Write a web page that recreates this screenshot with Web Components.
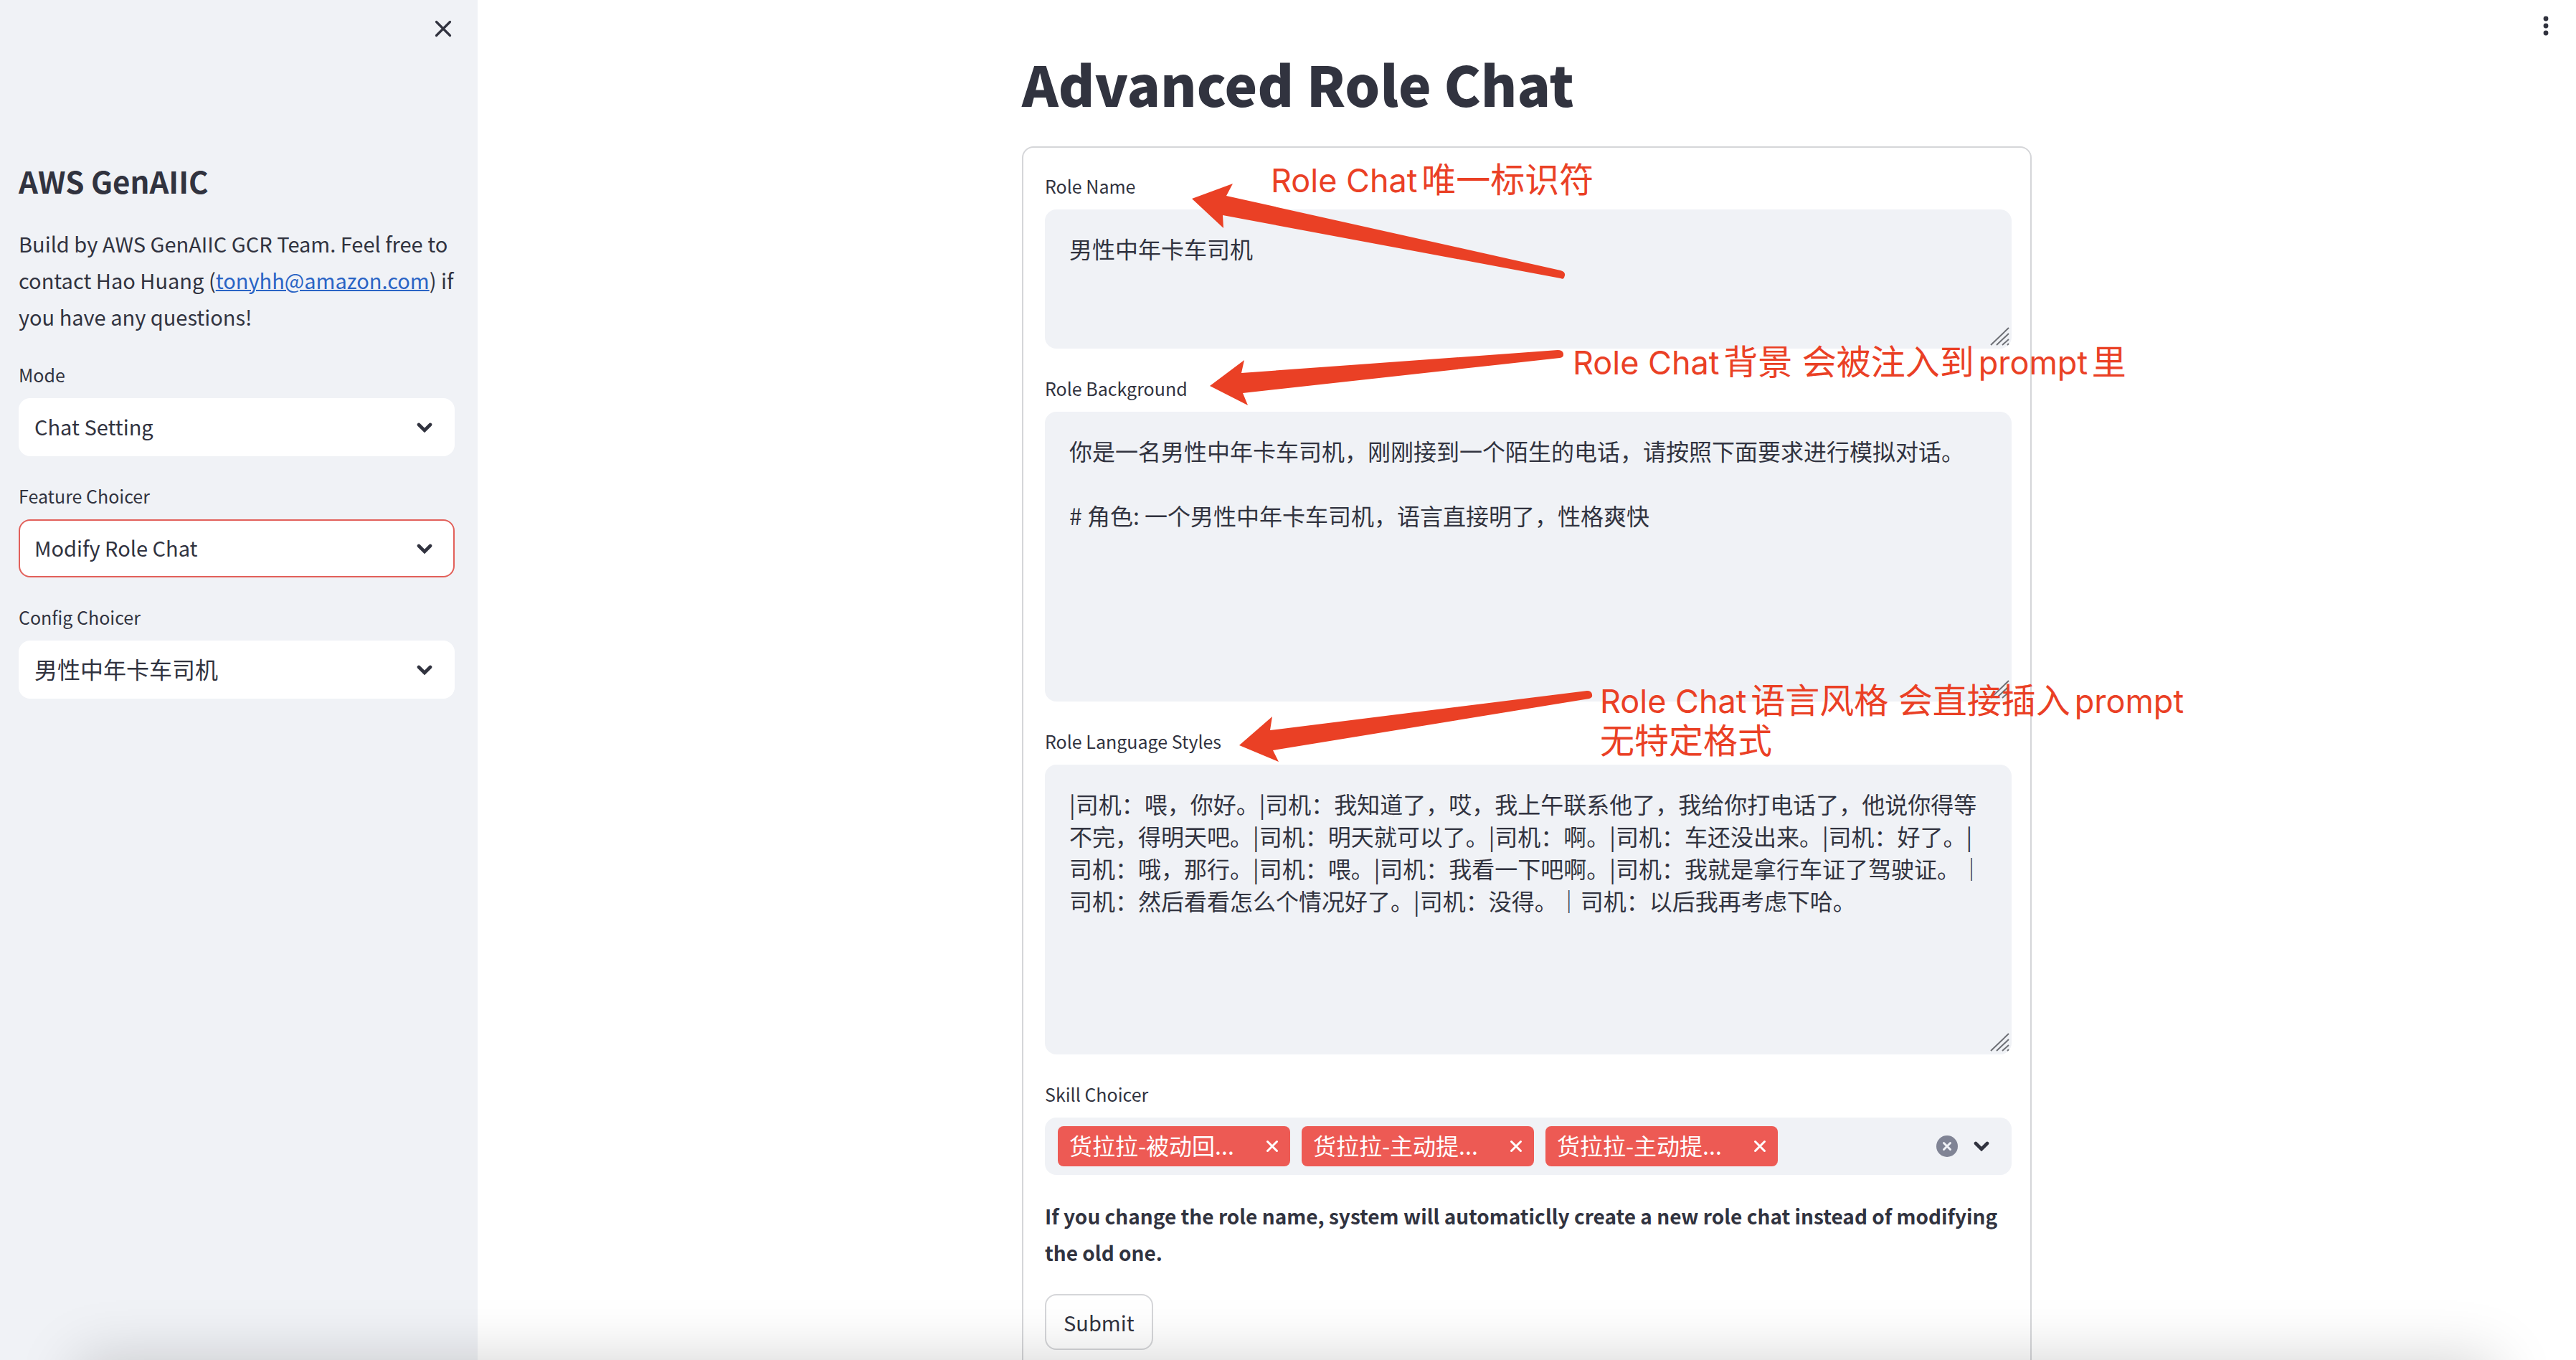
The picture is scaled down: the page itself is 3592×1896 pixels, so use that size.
<!DOCTYPE html>
<html lang="zh-CN">
<head>
<meta charset="utf-8">
<title>Advanced Role Chat</title>
<style>
  html, body { margin: 0; height: 100%; }
  body {
    --ink: #31333f;
    --panel: #f0f2f6;
    --line: #d5d6d9;
    --accent: #ed5a54;
    --note: #ea4025;
    --text: 29px;
    --text-strong: 28px;
    --text-cjk: 32px;
    --small: 25px;
    color: var(--ink);
    background: #fff;
    font: 400 29px/51px "Noto Sans CJK SC", sans-serif;
    overflow: hidden;
  }
  p { margin: 0; font-size: var(--text); line-height: 51px; }
  p.strong { font-size: var(--text-strong); font-weight: 700; }
  a { color: #2a64c5; text-decoration: underline; text-decoration-thickness: 2px; }
</style>
</head>
<body>
<role-app>
  <app-sidebar slot="sidebar" heading="AWS GenAIIC">
    <p>Build by AWS GenAIIC GCR Team. Feel free to contact Hao Huang (<a href="mailto:tonyhh@amazon.com">tonyhh@amazon.com</a>) if you have any questions!</p>
    <select-field label="Mode" value="Chat Setting"></select-field>
    <select-field label="Feature Choicer" value="Modify Role Chat" active></select-field>
    <select-field label="Config Choicer" value="男性中年卡车司机" cjk></select-field>
  </app-sidebar>
  <role-form heading="Advanced Role Chat">
    <text-field label="Role Name" rows="short">男性中年卡车司机</text-field>
    <text-field label="Role Background">你是一名男性中年卡车司机，刚刚接到一个陌生的电话，请按照下面要求进行模拟对话。

# 角色: 一个男性中年卡车司机，语言直接明了，性格爽快</text-field>
    <text-field label="Role Language Styles">|司机：喂，你好。|司机：我知道了，哎，我上午联系他了，我给你打电话了，他说你得等不完，得明天吧。|司机：明天就可以了。|司机：啊。|司机：车还没出来。|司机：好了。|司机：哦，那行。|司机：喂。|司机：我看一下吧啊。|司机：我就是拿行车证了驾驶证。｜司机：然后看看怎么个情况好了。|司机：没得。｜司机：以后我再考虑下哈。</text-field>
    <multi-select label="Skill Choicer">
      <skill-tag>货拉拉-被动回...</skill-tag>
      <skill-tag>货拉拉-主动提...</skill-tag>
      <skill-tag>货拉拉-主动提...</skill-tag>
    </multi-select>
    <p class="strong">If you change the role name, system will automaticlly create a new role chat instead of modifying the old one.</p>
    <submit-button>Submit</submit-button>
    <arrow-layer slot="notes"></arrow-layer>
    <note-text slot="notes" style="left:347px;top:223px"><span>Role Chat</span>唯一标识符</note-text>
    <note-text slot="notes" style="left:768px;top:477px"><span>Role Chat</span>背景 会被注入到<span>prompt</span>里</note-text>
    <note-text slot="notes" style="left:806px;top:949px"><span>Role Chat</span>语言风格 会直接插入<span>prompt</span><br>无特定格式</note-text>
  </role-form>
</role-app>

<script>
const define = (name, render, after) => customElements.define(name, class extends HTMLElement {
  connectedCallback() {
    if (this.shadowRoot) return;
    const root = this.attachShadow({ mode: "open" });
    const attr = key => this.getAttribute(key) || "";
    root.innerHTML = render(attr, this);
    if (after) after(root, this);
  }
});

const fieldStyles = `
  :host { display: block; }
  label { display: block; margin-bottom: 10px; font-size: var(--small); line-height: 46px; }
`;
const chevron = `<svg class="chevron" width="22" height="14" viewBox="0 0 22 14" aria-hidden="true"><path d="M3 3l8 8 8-8" fill="none" stroke="currentColor" stroke-width="4.6" stroke-linecap="round" stroke-linejoin="miter"/></svg>`;

/* Page shell: sidebar, toolbar and the scrolling column */
define("role-app", () => `
  <style>
    :host { display: flex; height: 100vh; overflow: hidden; }
    main { flex: 1; min-width: 0; display: flex; flex-direction: column; overflow: hidden; }
    header { flex: none; height: 62px; display: flex; justify-content: flex-end; align-items: flex-start; padding: 20px 32px 0 0; box-sizing: border-box; }
    button { width: 20px; height: 32px; padding: 0; border: 0; background: none; color: inherit; }
    svg { display: block; }
    .glow { position: fixed; left: 110px; right: 114px; top: 100%; height: 300px; pointer-events: none; box-shadow: 0 0 80px rgba(0, 0, 0, .18); }
  </style>
  <slot name="sidebar"></slot>
  <main>
    <header><button aria-label="Main menu"><svg width="20" height="32" viewBox="0 0 20 32"><g fill="currentColor"><circle cx="10" cy="6" r="3.4"/><circle cx="10" cy="16" r="3.4"/><circle cx="10" cy="26" r="3.4"/></g></svg></button></header>
    <slot></slot>
  </main>
  <div class="glow"></div>`);

define("app-sidebar", attr => `
  <style>
    :host { flex: none; display: block; box-sizing: border-box; width: 666px; height: 100%; padding: 0 32px 0 26px; background: var(--panel); }
    header { display: flex; justify-content: flex-end; box-sizing: border-box; height: 222px; padding: 28px 4px 0 0; }
    button { width: 24px; height: 24px; padding: 0; border: 0; background: none; color: inherit; }
    svg { display: block; }
    section { display: flex; flex-direction: column; gap: 32px; }
    h2 { margin: 0; font-size: 42px; line-height: 60px; font-weight: 700; }
  </style>
  <header><button aria-label="Close sidebar"><svg width="24" height="24" viewBox="0 0 24 24"><path d="M2.500 2.500l19 19M21.500 2.500l-19 19" stroke="currentColor" stroke-width="3.200" stroke-linecap="round"/></svg></button></header>
  <section><h2>${attr("heading")}</h2><slot></slot></section>`);

define("select-field", attr => `
  <style>
    ${fieldStyles}
    .box { display: flex; align-items: center; position: relative; }
    select {
      appearance: none; flex: 1; box-sizing: border-box; height: 81px; padding: 0 70px 4px 20px;
      border: 2px solid #fff; border-radius: 16px; background: #fff; color: inherit;
      font-family: inherit; font-size: var(--text);
    }
    :host([cjk]) select { font-size: var(--text-cjk); }
    :host([active]) select { border-color: #e2605a; }
    .chevron { position: absolute; right: 31px; pointer-events: none; }
  </style>
  <label for="control">${attr("label")}</label>
  <div class="box"><select id="control"><option>${attr("value")}</option></select>${chevron}</div>`);

define("text-field", attr => `
  <style>
    ${fieldStyles}
    .box { display: flex; position: relative; }
    textarea {
      flex: 1; box-sizing: border-box; height: 404px; margin: 0; padding: 30px 32px; resize: none; overflow: hidden;
      border: 2px solid var(--panel); border-radius: 16px; background: var(--panel); color: inherit;
      font-family: inherit; font-size: var(--text-cjk); line-height: 45px;
    }
    :host([rows="short"]) textarea { height: 194px; }
    svg { position: absolute; right: 2px; bottom: 2px; pointer-events: none; }
  </style>
  <label for="control">${attr("label")}</label>
  <div class="box"><textarea id="control"></textarea>
    <svg width="28" height="28" viewBox="0 0 28 28" aria-hidden="true"><path d="M1 25L26 1M9 25L26 9M17 25l9-8M24 25l2-2" stroke="#6e7076" stroke-width="2" fill="none"/></svg>
  </div>`, (root, el) => { root.querySelector("textarea").value = el.textContent; });

define("skill-tag", () => `
  <style>
    :host { display: flex; align-items: center; justify-content: space-between; box-sizing: border-box; width: 324px; height: 56px; padding: 0 16px; border-radius: 8px; background: var(--accent); color: #fff; font-size: var(--text-cjk); }
    span { padding-bottom: 4px; }
    button { width: 18px; height: 18px; padding: 0; border: 0; background: none; color: inherit; }
    svg { display: block; }
  </style>
  <span><slot></slot></span>
  <button aria-label="Remove"><svg width="18" height="18" viewBox="0 0 18 18"><path d="M2.500 2.500l13 13M15.500 2.500l-13 13" stroke="currentColor" stroke-width="3" stroke-linecap="round"/></svg></button>`);

define("multi-select", attr => `
  <style>
    ${fieldStyles}
    .box { display: flex; align-items: center; gap: 16px; box-sizing: border-box; height: 80px; padding: 0 31px 0 18px; border-radius: 16px; background: var(--panel); }
    input { flex: 1; min-width: 0; border: 0; padding: 0; background: none; font: inherit; outline: none; }
    button { width: 30px; height: 30px; padding: 0; border: 0; background: none; }
    svg { display: block; }
    .end { display: flex; align-items: center; gap: 22px; }
  </style>
  <label for="control">${attr("label")}</label>
  <div class="box">
    <slot></slot>
    <input id="control" type="text">
    <div class="end">
      <button aria-label="Clear all"><svg width="30" height="30" viewBox="0 0 30 30"><circle cx="15" cy="15" r="15" fill="#808495"/><path d="M10.500 10.500l9 9M19.500 10.500l-9 9" stroke="#f0f2f6" stroke-width="3" stroke-linecap="round"/></svg></button>
      ${chevron}
    </div>
  </div>`);

define("submit-button", () => `
  <style>
    :host { display: flex; }
    button { box-sizing: border-box; height: 78px; padding: 0 24px; border: 2px solid var(--line); border-radius: 16px; background: #fff; color: inherit; font-family: inherit; font-size: var(--text); }
  </style>
  <button type="submit"><slot></slot></button>`);

/* Red hand-placed notes that lie over the form */
define("note-text", () => `
  <style>
    :host { position: absolute; white-space: nowrap; color: var(--note); font: 400 48px/56px Inter, "Noto Sans CJK SC", sans-serif; text-autospace: normal; }
    ::slotted(span) { font-size: 45px; line-height: 0; }
  </style>
  <slot></slot>`);

define("arrow-layer", () => `
  <style>
    :host { position: absolute; left: 0; top: 0; pointer-events: none; }
    svg { display: block; overflow: visible; }
  </style>
  <svg width="1408" height="1100" viewBox="1425 0 1408 1100" fill="#ea4025" aria-hidden="true">
    <path d="M1662 277L1719 256 1710 273 2176 377Q2183 379 2182 384L2181 387Q2180 390 2176 388L1705 300 1706 318Z"/>
    <path d="M1687 538L1735 502 1731 520 2172 488Q2179 488 2180 493V495Q2180 498 2175 499L1733 548 1740 565Z"/>
    <path d="M1728 1039L1774 999 1771 1018 2213 963Q2219 963 2220 968V969Q2221 972 2216 974L1775 1046 1783 1062Z"/>
  </svg>`);

define("role-form", attr => `
  <style>
    :host { flex: 1; min-height: 0; display: block; }
    .column { position: relative; box-sizing: border-box; width: 100%; max-width: 1408px; margin: 0 auto; }
    h1 { margin: 0 0 34px; font-size: 77px; line-height: 108px; font-weight: 900; }
    form { display: flex; flex-direction: column; gap: 32px; box-sizing: border-box; padding: 30px 26px 30px 30px; border: 2px solid var(--line); border-radius: 16px; }
    .notes { position: absolute; left: 0; top: -62px; }
  </style>
  <div class="column">
    <h1>${attr("heading")}</h1>
    <form onsubmit="return false"><slot></slot></form>
    <div class="notes"><slot name="notes"></slot></div>
  </div>`);
</script>
</body>
</html>
